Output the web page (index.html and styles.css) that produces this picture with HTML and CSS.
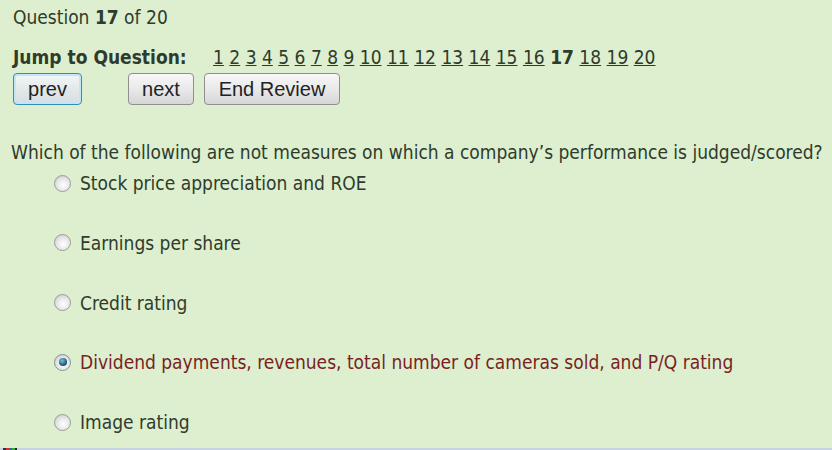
FILE: index.html
```html
<!DOCTYPE html>
<html>
<head>
<meta charset="utf-8">
<link rel="stylesheet" href="styles.css">
</head>
<body>
<div class="page">
  <div class="counter">Question <b>17</b> of 20</div>
  <div class="jump">
    <span class="jump-label">Jump to Question:</span>
    <span class="nums">
      <a href="#">1</a> <a href="#">2</a> <a href="#">3</a> <a href="#">4</a> <a href="#">5</a> <a href="#">6</a> <a href="#">7</a> <a href="#">8</a> <a href="#">9</a> <a href="#">10</a> <a href="#">11</a> <a href="#">12</a> <a href="#">13</a> <a href="#">14</a> <a href="#">15</a> <a href="#">16</a> <b>17</b> <a href="#">18</a> <a href="#">19</a> <a href="#">20</a>
    </span>
  </div>
  <div class="buttons">
    <button class="btn btn-prev">prev</button>
    <button class="btn btn-next">next</button>
    <button class="btn btn-end">End Review</button>
  </div>
  <div class="question">Which of the following are not measures on which a company’s performance is judged/scored?</div>
  <div class="options">
    <div class="option"><span class="radio"></span><span class="label">Stock price appreciation and ROE</span></div>
    <div class="option"><span class="radio"></span><span class="label">Earnings per share</span></div>
    <div class="option"><span class="radio"></span><span class="label">Credit rating</span></div>
    <div class="option selected"><span class="radio checked"></span><span class="label">Dividend payments, revenues, total number of cameras sold, and P/Q rating</span></div>
    <div class="option"><span class="radio"></span><span class="label">Image rating</span></div>
  </div>
</div>
<div class="strip"><span class="strip-icon"></span></div>
</body>
</html>
```
FILE: styles.css
```css
html, body {
  margin: 0;
  padding: 0;
  background: #ddefcf;
  height: 450px;
  overflow: hidden;
}
body {
  display: flex;
  flex-direction: column;
  font-family: "DejaVu Sans Condensed", "DejaVu Sans", sans-serif;
  font-size: 19px;
  color: #2f3b2c;
}
.page {
  flex: 1;
  min-height: 0;
  overflow: hidden;
  padding: 6px 0 0 13px;
}
.counter {
  line-height: 22px;
}
.jump {
  margin-top: 18px;
  display: flex;
  line-height: 22px;
  height: 22px;
}
.jump-label {
  font-weight: bold;
  width: 200px;
}
.nums {
  white-space: nowrap;
}
.nums a {
  color: #2f3b2c;
  text-decoration: underline;
}
.nums b {
  font-weight: bold;
}
.buttons {
  display: flex;
  margin-top: 5px;
  height: 32px;
}
.btn {
  font-family: "Liberation Sans", Arial, sans-serif;
  font-size: 20px;
  color: #222;
  border: 1px solid #8e8f8f;
  border-radius: 4px;
  background: linear-gradient(#f7f7f7, #e9e9e9 50%, #d6d6d6);
  padding: 0;
  height: 32px;
  margin: 0;
}
.btn-prev {
  width: 69px;
  border: 1px solid #3b8ab2;
  box-shadow: inset 0 0 0 2px #bfe7f7;
  background: linear-gradient(#f2f6f7, #e3e9eb 50%, #d7dee1);
}
.btn-next {
  width: 66px;
  margin-left: 46px;
}
.btn-end {
  width: 136px;
  margin-left: 10px;
}
.question {
  margin-top: 36px;
  line-height: 22px;
  margin-left: -2px;
  white-space: nowrap;
}
.options {
  display: flex;
  flex-direction: column;
  padding-left: 41px;
  margin-top: 9px;
}
.option {
  display: flex;
  align-items: center;
  height: 22px;
  line-height: 22px;
  margin-bottom: 37.75px;
}
.option .label {
  margin-left: 9px;
}
.option.selected .label {
  color: #7a1f1f;
}
.radio {
  width: 17px;
  height: 17px;
  border-radius: 50%;
  border: 1px solid #9c9c9c;
  background: radial-gradient(circle at 55% 60%, #ffffff, #e4e4e4 55%, #bdbdbd);
  box-sizing: border-box;
  position: relative;
}
.radio.checked {
  border-color: #85919a;
}
.radio.checked::after {
  content: "";
  position: absolute;
  left: 3.5px;
  top: 3.5px;
  width: 8px;
  height: 8px;
  border-radius: 50%;
  background: radial-gradient(circle at 40% 35%, #7cc0e0, #1d5577 65%, #0d2e44);
}
.strip {
  height: 2px;
  flex: none;
  background: #c6d3e3;
  display: flex;
}
.strip-icon {
  width: 14px;
  margin-left: 3px;
  background: linear-gradient(90deg, #333 0 3px, #c33 3px 6px, #36a 6px 9px, #3a3 9px 12px, #222 12px);
}
```
